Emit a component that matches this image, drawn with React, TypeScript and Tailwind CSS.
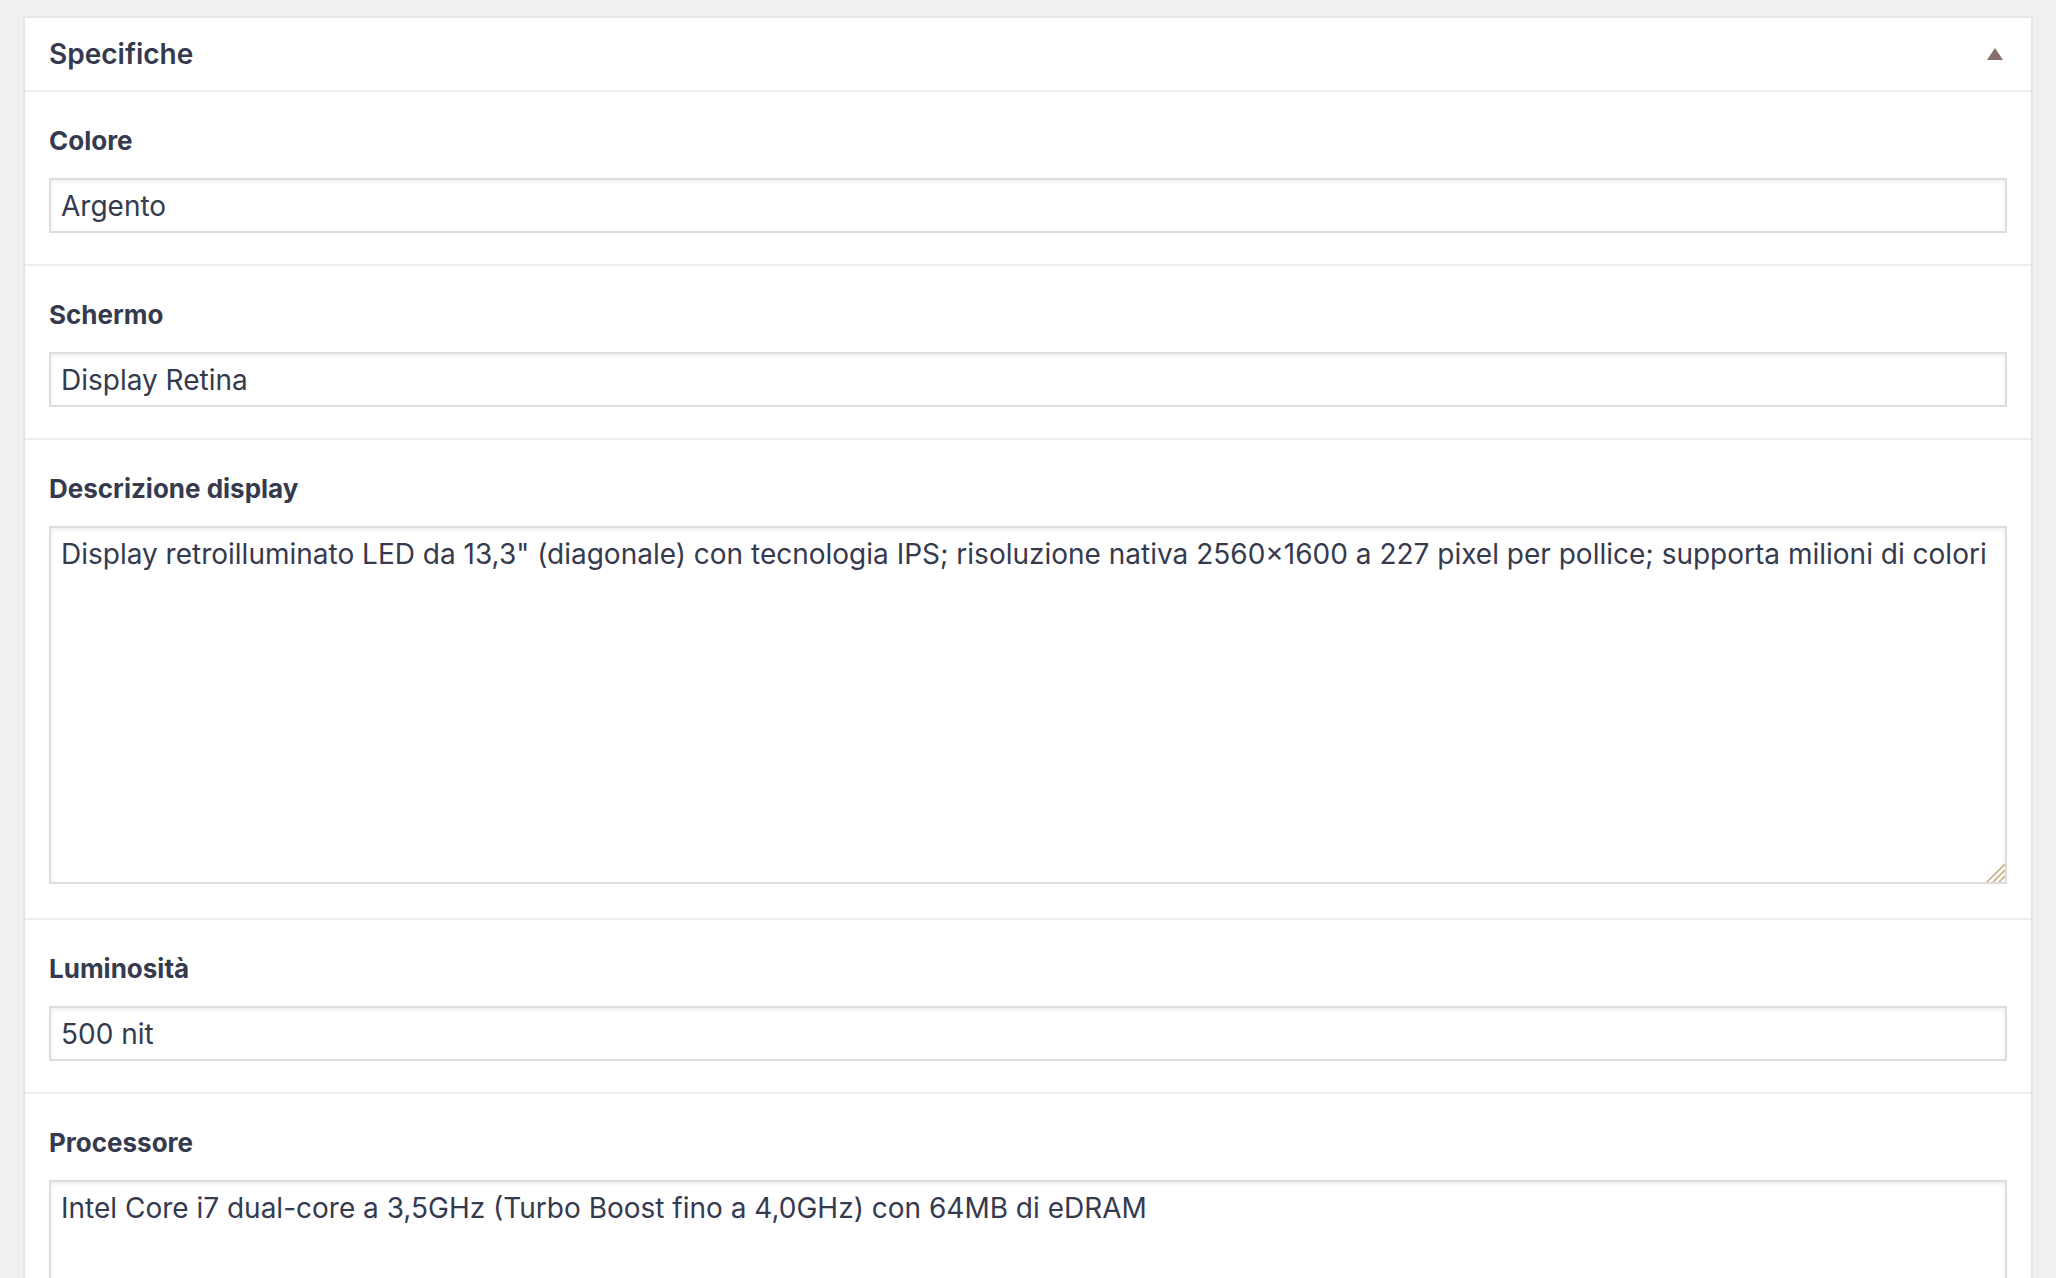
import React from "react";

type Field = {
  label: string;
  value: string;
  multiline?: boolean;
};

const fields: Field[] = [
  { label: "Colore", value: "Argento" },
  { label: "Schermo", value: "Display Retina" },
  {
    label: "Descrizione display",
    value:
      'Display retroilluminato LED da 13,3" (diagonale) con tecnologia IPS; risoluzione nativa 2560×1600 a 227 pixel per pollice; supporta milioni di colori',
    multiline: true,
  },
  { label: "Luminosità", value: "500 nit" },
  {
    label: "Processore",
    value: "Intel Core i7 dual-core a 3,5GHz (Turbo Boost fino a 4,0GHz) con 64MB di eDRAM",
    multiline: true,
  },
];

const font = { fontFamily: 'Inter, "Noto Sans", "Liberation Sans", sans-serif' };

function ResizeGrip() {
  return (
    <svg
      className="pointer-events-none absolute bottom-[2px] right-[2px]"
      width="20"
      height="20"
      viewBox="0 0 20 20"
    >
      <path d="M20 2 L2 20 M20 8 L8 20 M20 14 L14 20" stroke="#c9ab84" strokeWidth="1.6" />
    </svg>
  );
}

function FieldRow({ field }: { field: Field }) {
  return (
    <div className="border-t-2 border-[#eeeeee] px-[24px] pt-[31px] pb-[31px]">
      <label className="block text-[26px] font-bold leading-[36px] text-[#353a4e]">{field.label}</label>
      {field.multiline ? (
        <div className="relative mt-[19px] mb-[3px]">
          <textarea
            readOnly
            defaultValue={field.value}
            style={font}
            className="block h-[358px] w-full resize-none border-2 border-[#dddddd] bg-white px-[10px] py-[6px] text-[28px] leading-[40px] text-[#353a4e] shadow-[inset_0_2px_4px_rgba(0,0,0,0.07)] outline-none"
          />
          <ResizeGrip />
        </div>
      ) : (
        <input
          readOnly
          defaultValue={field.value}
          style={font}
          className="mt-[19px] block h-[55px] w-full border-2 border-[#dddddd] bg-white px-[10px] text-[28px] text-[#353a4e] shadow-[inset_0_2px_4px_rgba(0,0,0,0.07)] outline-none"
        />
      )}
    </div>
  );
}

export default function App() {
  return (
    <div className="min-h-screen bg-[#f1f1f1] px-[23px] pt-[16px]" style={font}>
      <div className="border-2 border-b-0 border-[#e5e5e5] bg-white">
        <div className="flex h-[72px] items-center justify-between pl-[24px] pr-[28px]">
          <h2 className="text-[28px] font-semibold text-[#353a4e]">Specifiche</h2>
          <svg width="16" height="12" viewBox="0 0 16 12">
            <path d="M8 0 L16 12 L0 12 Z" fill="#876e6a" />
          </svg>
        </div>
        {fields.map((f) => (
          <FieldRow key={f.label} field={f} />
        ))}
      </div>
    </div>
  );
}
